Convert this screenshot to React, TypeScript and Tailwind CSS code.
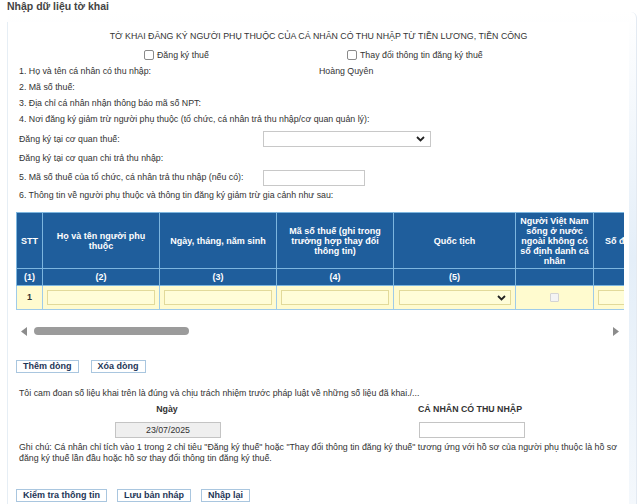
import React from 'react'

const font = { fontFamily: '"Liberation Sans", Arial, sans-serif' }

function Chevron({ className = '' }: { className?: string }) {
  return (
    <svg width="9" height="6" viewBox="0 0 9 6" className={className}>
      <path d="M1 1 L4.5 4.5 L8 1" fill="none" stroke="#222" strokeWidth="1.8" />
    </svg>
  )
}

function Box() {
  return <span className="inline-block w-[10px] h-[10px] border border-[#8a8a8a] rounded-[2px] bg-white mr-[3px] align-[-2px]" />
}

function Btn({ label }: { label: string }) {
  return (
    <button className="h-[13px] px-[6px] border border-[#a9c6df] bg-white text-[9px] font-bold text-[#1d3557] leading-[11px]">
      {label}
    </button>
  )
}

const th = 'border border-[#7db6df] text-white font-bold text-[9px] leading-[10px] text-center align-middle px-[4px]'
const td = 'border border-[#9fcbe9] align-middle text-center'

function YInput() {
  return <div className="mx-auto w-[108px] h-[15px] bg-[#fffdd8] border border-[#e2da9a]" />
}

export default function App() {
  return (
    <div className="w-[640px] h-[504px] bg-white text-[#333] overflow-hidden" style={font}>
      <div className="h-[12px] pl-[7px] text-[10.5px] font-bold leading-[12px] text-[#444]">Nhập dữ liệu tờ khai</div>
      <div className="ml-[7px] w-[630px] h-[492px] bg-gradient-to-b from-[#ffffff] via-[#e4eef8] to-[#f4f8fc] border-r border-[#e3eaf2] rounded-tr-md pt-[10px] pr-[7px]">
        <div className="bg-white h-full pl-[8px] pr-0 border-l border-[#e6eef5] text-[8.8px]">
          <div className="pt-[6px] h-[22px] leading-[16px] text-center pr-[8px]">
            TỜ KHAI ĐĂNG KÝ NGƯỜI PHỤ THUỘC CỦA CÁ NHÂN CÓ THU NHẬP TỪ TIỀN LƯƠNG, TIỀN CÔNG
          </div>
          <div className="mt-[3px] h-[16px] leading-[16px] flex">
            <div className="ml-[128px] w-[203px]"><Box />Đăng ký thuế</div>
            <div><Box />Thay đổi thông tin đăng ký thuế</div>
          </div>
          <div className="h-[16px] leading-[16px] pl-[3px] flex">
            <span className="w-[300px]">1. Họ và tên cá nhân có thu nhập:</span>
            <span>Hoàng Quyên</span>
          </div>
          <div className="h-[16px] leading-[16px] pl-[3px]">2. Mã số thuế:</div>
          <div className="h-[16px] leading-[16px] pl-[3px]">3. Địa chỉ cá nhân nhận thông báo mã số NPT:</div>
          <div className="h-[16px] leading-[16px] pl-[3px]">
            4. Nơi đăng ký giảm trừ người phụ thuộc (tổ chức, cá nhân trả thu nhập/cơ quan quản lý):
          </div>
          <div className="mt-[4px] h-[16px] leading-[16px] pl-[3px] flex items-center">
            <span className="w-[244px]">Đăng ký tại cơ quan thuế:</span>
            <div className="w-[168px] h-[16px] border border-[#c8c8c8] bg-white flex items-center justify-end pr-[5px]">
              <Chevron />
            </div>
          </div>
          <div className="mt-[3px] h-[16px] leading-[16px] pl-[3px]">Đăng ký tại cơ quan chi trả thu nhập:</div>
          <div className="mt-[3px] h-[16px] leading-[16px] pl-[3px] flex items-start">
            <span className="w-[244px] whitespace-nowrap">5. Mã số thuế của tổ chức, cá nhân trả thu nhập (nếu có):</span>
            <div className="w-[102px] h-[16px] border border-[#c8c8c8] bg-white mt-[1px]" />
          </div>
          <div className="mt-[2px] h-[16px] leading-[16px] pl-[3px]">
            6. Thông tin về người phụ thuộc và thông tin đăng ký giảm trừ gia cảnh như sau:
          </div>

          <div className="mt-[9px] w-[608px] overflow-hidden">
            <table className="table-fixed border-collapse w-[842px]">
              <colgroup>
                <col className="w-[26px]" />
                <col className="w-[117px]" />
                <col className="w-[117px]" />
                <col className="w-[117px]" />
                <col className="w-[122px]" />
                <col className="w-[78px]" />
                <col className="w-[117px]" />
                <col className="w-[148px]" />
              </colgroup>
              <thead>
                <tr className="h-[56px] bg-[#1f5e9c]">
                  <th className={th + ' !px-0'}>STT</th>
                  <th className={th + ' !px-[9px]'}>Họ và tên người phụ thuộc</th>
                  <th className={th}>Ngày, tháng, năm sinh</th>
                  <th className={th + ' !px-[9px]'}>Mã số thuế (ghi trong trường hợp thay đổi thông tin)</th>
                  <th className={th}>Quốc tịch</th>
                  <th className={th + ' !px-[3px]'}>Người Việt Nam sống ở nước ngoài không có số định danh cá nhân</th>
                  <th className={th + ' !px-[11px] whitespace-nowrap text-left'}>Số định danh cá nhân</th>
                  <th className={th}>Ghi chú</th>
                </tr>
                <tr className="h-[17px] bg-[#1f5e9c]">
                  <th className={th + ' !px-0'}>(1)</th>
                  <th className={th}>(2)</th>
                  <th className={th}>(3)</th>
                  <th className={th}>(4)</th>
                  <th className={th}>(5)</th>
                  <th className={th}></th>
                  <th className={th}></th>
                  <th className={th}></th>
                </tr>
              </thead>
              <tbody>
                <tr className="h-[24px] bg-[#fffbcf]">
                  <td className={td + ' text-[9px] font-bold'}>1</td>
                  <td className={td}><YInput /></td>
                  <td className={td}><YInput /></td>
                  <td className={td}><YInput /></td>
                  <td className={td}>
                    <div className="mx-auto w-[112px] h-[15px] bg-[#fffdd8] border border-[#e2da9a] flex items-center justify-end pr-[4px]">
                      <Chevron />
                    </div>
                  </td>
                  <td className={td}>
                    <div className="mx-auto w-[9px] h-[9px] border border-[#d4d4d4] bg-[#f4f4f4] rounded-[1px]" />
                  </td>
                  <td className={td}><YInput /></td>
                  <td className={td}><YInput /></td>
                </tr>
              </tbody>
            </table>
          </div>

          <div className="mt-[15px] h-[12px] w-[608px] flex items-center pl-[5px] pr-[5px]">
            <svg width="6" height="9" viewBox="0 0 6 9"><path d="M6 0 L0 4.5 L6 9 Z" fill="#8c8c8c" /></svg>
            <div className="ml-[7px] w-[155px] h-[8px] rounded-full bg-[#9b9b9b]" />
            <div className="flex-1" />
            <svg width="6" height="9" viewBox="0 0 6 9"><path d="M0 0 L6 4.5 L0 9 Z" fill="#8c8c8c" /></svg>
          </div>

          <div className="mt-[23px] flex gap-[12px]">
            <Btn label="Thêm dòng" />
            <Btn label="Xóa dòng" />
          </div>

          <div className="mt-[12px] h-[16px] leading-[16px] pl-[3px]">
            Tôi cam đoan số liệu khai trên là đúng và chịu trách nhiệm trước pháp luật về những số liệu đã khai./...
          </div>
          <div className="h-[16px] leading-[16px] flex font-bold">
            <div className="w-[302px] text-center">Ngày</div>
            <div className="w-[304px] text-center">CÁ NHÂN CÓ THU NHẬP</div>
          </div>
          <div className="mt-[5px] h-[16px] flex">
            <div className="ml-[99px] w-[106px] h-[16px] border border-[#c4c4c4] bg-[#efefef] text-center leading-[14px]">23/07/2025</div>
            <div className="ml-[198px] w-[106px] h-[16px] border border-[#c4c4c4] bg-white" />
          </div>
          <div className="mt-[4px] pl-[3px] leading-[11px] whitespace-nowrap">
            Ghi chú: Cá nhân chỉ tích vào 1 trong 2 chỉ tiêu "Đăng ký thuế" hoặc "Thay đổi thông tin đăng ký thuế" tương ứng với hồ sơ của người phụ thuộc là hồ sơ
            <br />
            đăng ký thuế lần đầu hoặc hồ sơ thay đổi thông tin đăng ký thuế.
          </div>
          <div className="mt-[25px] flex gap-[10px]">
            <Btn label="Kiểm tra thông tin" />
            <Btn label="Lưu bản nháp" />
            <Btn label="Nhập lại" />
          </div>
        </div>
      </div>
    </div>
  )
}
